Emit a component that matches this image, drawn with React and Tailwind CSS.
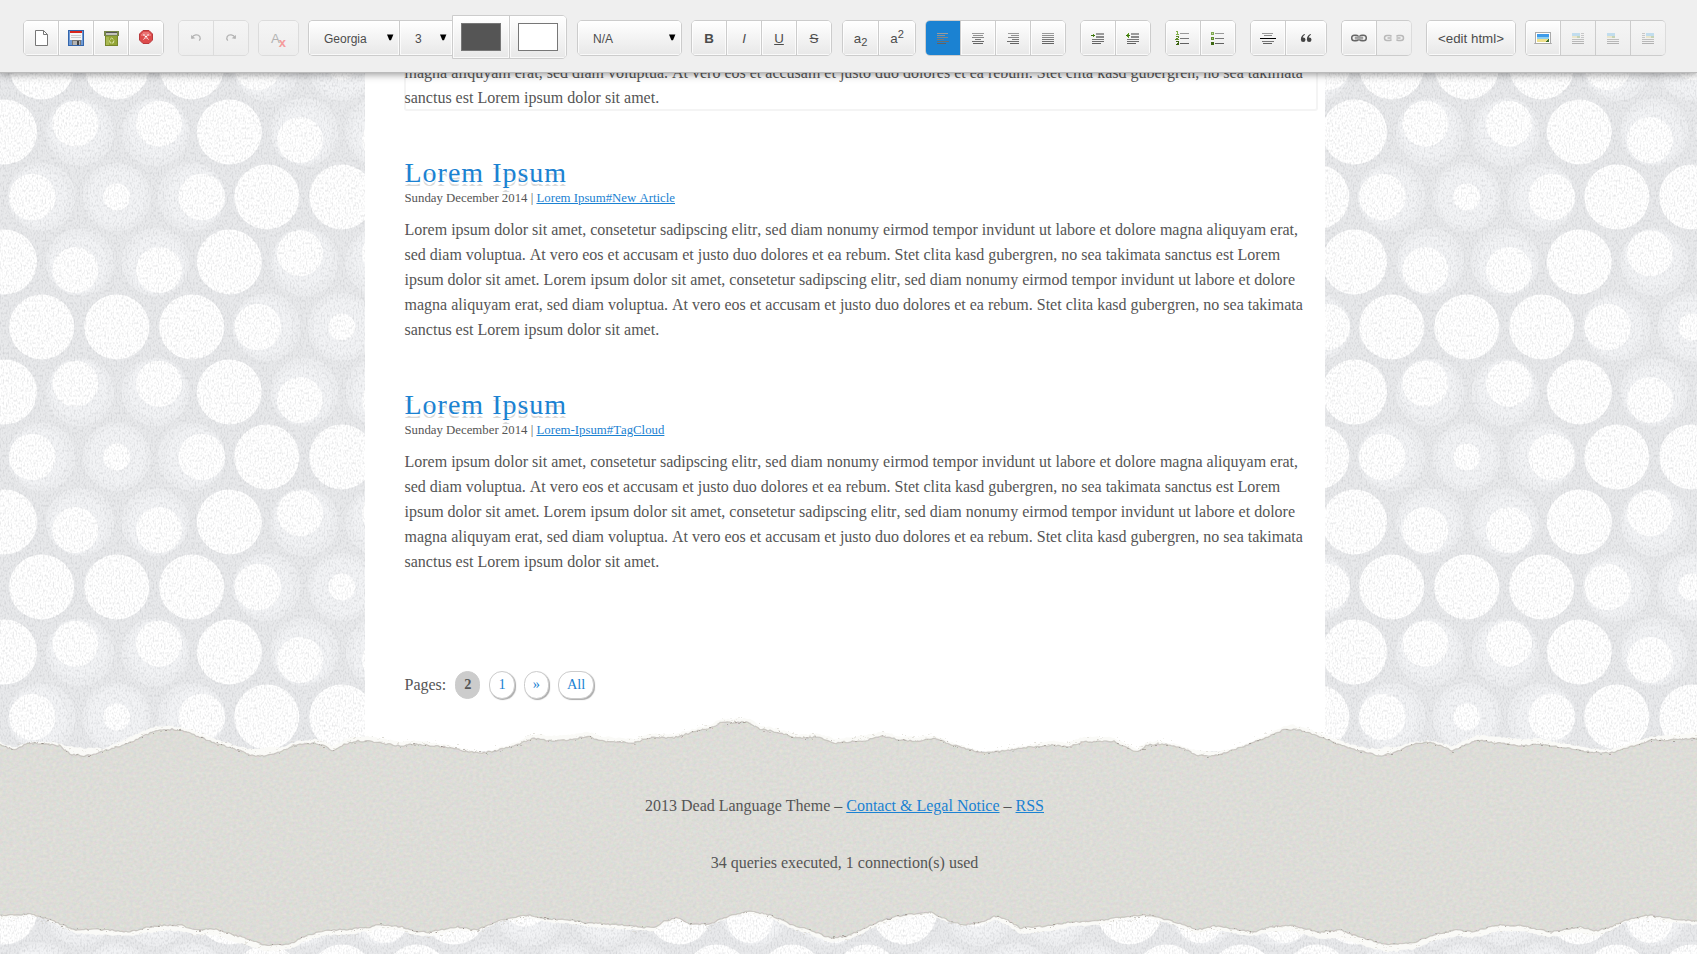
import React from "react";

const LINE_A =
  "Lorem ipsum dolor sit amet, consetetur sadipscing elitr, sed diam nonumy eirmod tempor invidunt ut labore et dolore magna aliquyam erat, sed diam voluptua. At vero eos et accusam et justo duo dolores et ea rebum. Stet clita kasd gubergren, no sea takimata sanctus est Lorem ipsum dolor sit amet.";
const LOREM = `${LINE_A} ${LINE_A}`;
const TAIL =
  "magna aliquyam erat, sed diam voluptua. At vero eos et accusam et justo duo dolores et ea rebum. Stet clita kasd gubergren, no sea takimata sanctus est Lorem ipsum dolor sit amet.";

/* ---------- dotted backdrop ---------- */

// [ring x, ring y, dot x, dot y, dot radius]
const RINGS = [
  [80, 132, 75.3, 123.7, 23],
  [155.5, 132, 159, 123.7, 23],
  [304.5, 132, 300, 140, 23],
  [379.5, 132, 385, 140, 23],
  [41.5, 197, 32.3, 197, 23.3],
  [116.7, 197, 116.7, 197, 13.5],
  [191.5, 197, 201.7, 197, 23.3],
  [80, 262, 75.3, 270, 23],
  [155.5, 262, 159, 270, 23],
  [304.5, 262, 300, 253.3, 23],
  [379.5, 262, 385, 253.3, 23],
  [266.5, 67, 257.7, 67, 23.3],
  [341.8, 67, 341.8, 67, 13.5],
  [416.7, 67, 426.7, 67, 23.3],
];
const DOTS = [
  [4.5, 132],
  [454.5, 132],
  [229.3, 132],
  [4.5, 262],
  [454.5, 262],
  [229.3, 262],
  [4.5, 2],
  [454.5, 2],
  [229.3, 2],
  [266.8, 197],
  [341.8, 197],
  [416.8, 197],
  [41.7, 67],
  [116.8, 67],
  [191.7, 67],
];
const WRAPPED = [
  [80, 2, 75.3, 10, 23],
  [155.5, 2, 159, 10, 23],
  [304.5, 2, 300, -6.7, 23],
  [379.5, 2, 385, -6.7, 23],
];

function Backdrop() {
  const rings = [...RINGS, ...WRAPPED];
  return (
    <svg className="absolute inset-0" width="1697" height="954" aria-hidden="true">
      <defs>
        <pattern id="dots" width="450" height="260" patternUnits="userSpaceOnUse">
          <rect width="450" height="260" fill="#e8e9eb" />
          {rings.map((r, i) => (
            <circle key={`a${i}`} cx={r[0]} cy={r[1]} r="34" fill="#eeeff1" />
          ))}
          {rings.map((r, i) => (
            <circle key={`b${i}`} cx={(r[0] * 2 + r[2]) / 3} cy={(r[1] * 2 + r[3]) / 3} r="29" fill="#f2f3f5" />
          ))}
          {rings.map((r, i) => (
            <circle key={`c${i}`} cx={r[2]} cy={r[3]} r={r[4]} fill="#fff" />
          ))}
          {DOTS.map((d, i) => (
            <circle key={`d${i}`} cx={d[0]} cy={d[1]} r="32.5" fill="#fff" />
          ))}
        </pattern>
        <filter id="weave" x="0" y="0" width="100%" height="100%" colorInterpolationFilters="sRGB">
          <feTurbulence type="fractalNoise" baseFrequency="0.62 0.4" numOctaves="1" seed="4" />
          <feColorMatrix values="0 0 0 0 0.52  0 0 0 0 0.53  0 0 0 0 0.55  0.6 0 0 0 -0.27" />
        </filter>
      </defs>
      <rect width="1697" height="954" fill="url(#dots)" />
      <rect width="1697" height="954" filter="url(#weave)" />
    </svg>
  );
}

/* ---------- torn paper ---------- */

const TOP = [0,745,15,750,28,743,45,744,60,746,70,754,85,756,100,752,120,746,135,740,155,731,173,729,185,731,200,737,215,743,235,749,250,755,265,756,280,752,295,745,315,743,325,746,333,751,345,744,358,741,370,741,400,746,413,744,447,747,460,750,483,753,503,749,517,745,533,738,552,741,570,740,587,736,603,741,633,743,653,737,673,738,697,731,710,728,720,723,748,722,760,729,777,732,797,738,817,737,835,743,863,741,883,736,900,740,917,741,933,738,953,745,983,753,1003,751,1030,747,1053,745,1067,747,1083,742,1113,741,1125,747,1137,752,1147,745,1163,744,1180,747,1197,755,1213,756,1230,751,1247,745,1267,737,1283,730,1293,729,1303,731,1323,738,1340,745,1357,750,1380,756,1397,752,1410,745,1427,742,1442,746,1452,751,1463,746,1477,740,1497,743,1523,746,1537,744,1567,748,1590,752,1610,753,1633,746,1650,740,1670,740,1698,738];
const BOTTOM = [0,916,15,915,30,914,45,918,60,924,75,930,90,929,110,930,130,932,145,928,165,925,180,925,195,930,215,929,235,935,250,940,265,945,290,944,305,936,325,930,345,930,370,927,377,924,403,927,417,932,430,932,458,927,477,930,493,923,510,918,530,915,550,919,570,920,587,923,620,925,653,928,663,922,677,917,690,924,710,924,727,917,747,911,770,915,790,924,810,930,830,938,847,936,863,929,883,920,903,915,930,912,947,920,963,925,983,922,995,916,1007,920,1020,928,1047,926,1070,922,1097,921,1120,917,1147,915,1163,919,1183,924,1197,930,1213,926,1233,929,1253,932,1270,927,1290,925,1303,928,1320,932,1340,930,1363,938,1387,945,1413,943,1433,935,1457,930,1473,932,1497,925,1523,926,1550,932,1580,927,1597,931,1610,927,1627,920,1650,915,1673,919,1698,921];
// Rim thickness along each edge
const RIM_TOP = [0,3,28,1,62,3,72,8,90,7,105,2,130,5,150,5,173,3,215,4,240,4,255,7,270,8,285,3,330,4,355,5,400,4,483,1,550,5,633,4,700,3,740,4,800,3,860,5,983,1,1080,5,1180,2,1200,5,1240,1,1290,4,1350,4,1370,5,1385,8,1405,3,1425,1,1450,4,1480,5,1520,7,1560,4,1600,3,1645,3,1670,5,1698,5];
const RIM_BOTTOM = [0,3,30,1,50,1,75,3,95,6,130,4,165,6,200,5,235,7,265,6,290,5,325,5,370,4,430,4,500,1,530,3,600,4,650,3,690,1,727,1,747,3,800,4,850,4,930,2,970,1,1020,6,1090,4,1147,2,1200,4,1260,4,1300,6,1340,8,1387,7,1430,6,1500,6,1550,5,1590,6,1627,1,1650,3,1698,4];

function randomizer(seed) {
  let s = seed;
  return () => {
    s = (s * 16807) % 2147483647;
    return s / 2147483647;
  };
}
function sample(points, x) {
  for (let i = 2; i < points.length; i += 2) {
    if (x <= points[i]) {
      const t = (x - points[i - 2]) / (points[i] - points[i - 2]);
      return points[i - 1] + t * (points[i + 1] - points[i - 1]);
    }
  }
  return points[points.length - 1];
}
function edge(points, rim, sign, seed, rough) {
  const rnd = randomizer(seed);
  const out = [];
  for (let x = 0; x <= 1698; x += 2) {
    const y = sample(points, x) + sign * (rim ? sample(rim, x) : 0) + (rnd() - 0.5) * rough;
    out.push([x, Math.round(y * 10) / 10]);
  }
  return out;
}
const toPath = (pts) => "M" + pts.map((p) => p.join(" ")).join("L");
const closed = (a, b) => "M" + [...a, ...[...b].reverse()].map((p) => p.join(" ")).join("L") + "Z";

const topEdge = edge(TOP, null, -1, 11, 1.6);
const bottomEdge = edge(BOTTOM, null, 1, 23, 1.6);
const topRim = edge(TOP, RIM_TOP, -1, 37, 1.8);
const bottomRim = edge(BOTTOM, RIM_BOTTOM, 1, 51, 1.8);

function specks(count, seed, spread, shift) {
  const rnd = randomizer(seed);
  const out = [];
  for (let i = 0; i < count; i++) {
    const x = Math.floor(rnd() * 1697);
    const top = rnd() > 0.5;
    const base = sample(top ? TOP : BOTTOM, x) + (top ? -shift : shift);
    const strength = rnd();
    out.push({ x, y: Math.round(base + (rnd() - 0.5) * spread), w: rnd() > 0.6 ? 2 : 1, o: 0.15 + strength * 0.4 });
  }
  return out;
}
const darkSpecks = specks(420, 77, 3, 0);
const rimSpecks = specks(900, 131, 6, 3);

function Paper() {
  return (
    <svg className="absolute inset-0" width="1697" height="954" aria-hidden="true">
      <defs>
        <filter id="grain" x="0" y="0" width="100%" height="100%" colorInterpolationFilters="sRGB">
          <feTurbulence type="fractalNoise" baseFrequency="0.3 0.36" numOctaves="3" seed="9" result="n" />
          <feColorMatrix in="n" values="0.1 0 0 0 0.815  0 0.08 0 0 0.824  0.03 0 0.07 0 0.795  0 0 0 0 1" result="c" />
          <feComposite in="c" in2="SourceGraphic" operator="in" />
        </filter>
      </defs>
      <path d={closed(topRim, bottomRim)} fill="#fafaf7" />
      {rimSpecks.map((s, i) => (
        <rect key={i} x={s.x} y={s.y} width={s.w} height="1" fill="#cfccc2" opacity={s.o} />
      ))}
      <path d={closed(topEdge, bottomEdge)} fill="#dddcd7" filter="url(#grain)" />
      <path d={toPath(topEdge)} fill="none" stroke="#aca69f" strokeWidth="1.200" opacity="0.5" />
      <path d={toPath(bottomEdge)} fill="none" stroke="#aca69f" strokeWidth="1.200" opacity="0.5" />
      {darkSpecks.map((s, i) => (
        <rect key={i} x={s.x} y={s.y} width={s.w} height="1" fill="#7d736c" opacity={s.o} />
      ))}
    </svg>
  );
}

/* ---------- toolbar ---------- */

const BTN = "flex items-center justify-center shadow-[inset_0_0_0_1px_rgba(255,255,255,0.75)] bg-linear-to-b from-white to-[#e8e8e8]";

function Group({ className = "", height = "h-9", children }) {
  return (
    <div className={`flex ${height} shrink-0 overflow-hidden rounded-[5px] border border-[#ccc] divide-x divide-[#ccc] ${className}`}>
      {children}
    </div>
  );
}
function Btn({ w = "w-[35px]", className = "", children }) {
  return <button className={`${BTN} ${w} ${className}`}>{children}</button>;
}
function Svg({ children, className = "" }) {
  return (
    <svg width="18" height="18" viewBox="0 0 18 18" className={`shrink-0 ${className}`} shapeRendering="crispEdges">
      {children}
    </svg>
  );
}
const Arrow = () => (
  <svg width="7" height="7" viewBox="0 0 7 7" className="-mt-[3px] shrink-0">
    <path d="M0 0.500h6.400L4 6.300H2.400z" fill="#000" />
  </svg>
);

const NewIcon = () => (
  <Svg>
    <path d="M3.500 1.500h8l4 4v11h-12z" fill="#fff" stroke="#777" shapeRendering="auto" />
    <path d="M11.500 1.500v4h4" fill="none" stroke="#777" shapeRendering="auto" />
  </Svg>
);
const SaveIcon = () => (
  <Svg>
    <rect x="1.500" y="1.500" width="15" height="15" fill="#6f9bd6" stroke="#3465ab" />
    <rect x="3" y="2" width="12" height="9" fill="#f6f6f6" />
    <rect x="3" y="2" width="12" height="2" fill="#d8251b" />
    <rect x="4" y="6" width="10" height="1" fill="#ccc" />
    <rect x="4" y="8" width="10" height="1" fill="#ccc" />
    <rect x="5" y="11" width="9" height="5" fill="#777" />
    <rect x="6" y="12" width="7" height="4" fill="#b4b4b4" />
    <rect x="10" y="12" width="2" height="4" fill="#444" />
  </Svg>
);
const BinIcon = () => (
  <Svg>
    <rect x="3" y="7" width="13" height="10" fill="#76852b" />
    <rect x="4" y="7" width="11" height="9" fill="#93a535" />
    <rect x="4" y="8" width="3" height="8" fill="#a9b952" />
    <rect x="2" y="2" width="15" height="5" fill="#78874a" />
    <rect x="4" y="3" width="11" height="1" fill="#555" />
    <rect x="4" y="4" width="11" height="2" fill="#c4c4bd" />
    <path d="M8 10.500l1.700-1.500 1.700 1.500M7.500 11.500l.8 2.500h1.200M12 11.500l-.8 2.500H10" fill="none" stroke="#dde6ac" shapeRendering="auto" />
  </Svg>
);
const StopIcon = () => (
  <Svg className="-mt-[2px] -ml-px">
    <path d="M6 2.500h6l3.500 3.500v6l-3.500 3.500h-6l-3.500-3.500v-6z" fill="#dd4b4b" stroke="#b93a3e" shapeRendering="auto" />
    <path d="M4 8V6.500L6.500 4h5L14 6.500V8z" fill="#ee8888" opacity="0.7" />
    <path d="M6.500 6.500l5 5M11.500 6.500l-5 5" stroke="#fff" strokeWidth="1.200" strokeDasharray="1.400 0.800" shapeRendering="auto" />
  </Svg>
);

const GREYS = ["#9b9b9b", "#919191", "#858585", "#797979", "#6e6e6e", "#636363"];
function Lines({ rows }) {
  return (
    <Svg>
      {rows.map(([x, w], i) => (
        <rect key={i} x={x} y={4 + i * 2} width={w} height="1" fill={GREYS[i]} />
      ))}
    </Svg>
  );
}
const LEFT = [[3, 11], [3, 8], [3, 11], [3, 7], [3, 12], [3, 9]];
const CENTER = [[3, 12], [4, 10], [3, 12], [6, 6], [3, 12], [4, 10]];
const RIGHT = [[4, 11], [7, 8], [4, 11], [8, 7], [3, 12], [6, 9]];
const FULL = [[3, 12], [3, 12], [3, 12], [3, 12], [3, 12], [3, 12]];

function Indent({ flip }) {
  return (
    <Svg>
      <path d={flip ? "M2 6.500l3-2.500v5z" : "M6.500 6.500l-3-2.500v5z"} fill="#5d9a1f" />
      <rect x="2" y="6" width="4" height="1" fill="#3c7012" />
      <rect x="7" y="4" width="8" height="2" fill="#9b9b9b" />
      <rect x="7" y="7" width="8" height="2" fill="#8a8a8a" />
      <rect x="3" y="10" width="12" height="1" fill="#777" />
      <rect x="3" y="12" width="12" height="1" fill="#6c6c6c" />
      <rect x="3" y="14" width="9" height="1" fill="#606060" />
    </Svg>
  );
}
const NumberList = () => (
  <Svg>
    <path d="M2 2.500h1.500V5M2 5.500h3" fill="none" stroke="#7fae45" />
    <path d="M2 7.500h2.500v1L2 10.500h3" fill="none" stroke="#5c8a28" />
    <path d="M2 12.500h2.500v3H2M3 14h2" fill="none" stroke="#3c6410" />
    <rect x="6" y="4" width="9" height="1" fill="#999" />
    <rect x="6" y="9" width="9" height="1" fill="#777" />
    <rect x="6" y="14" width="9" height="1" fill="#606060" />
  </Svg>
);
const BulletList = () => (
  <Svg>
    <rect x="2" y="3" width="3" height="3" fill="#80a951" />
    <rect x="2" y="8" width="3" height="3" fill="#608c30" />
    <rect x="2" y="13" width="3" height="3" fill="#3e6812" />
    <rect x="3" y="4" width="1" height="1" fill="#c6dba5" />
    <rect x="3" y="9" width="1" height="1" fill="#a5c67a" />
    <rect x="6" y="4" width="9" height="1" fill="#999" />
    <rect x="6" y="9" width="9" height="1" fill="#777" />
    <rect x="6" y="14" width="9" height="1" fill="#606060" />
  </Svg>
);
const Rule = () => (
  <Svg>
    <rect x="3" y="4" width="11" height="1" fill="#999" />
    <rect x="5" y="6" width="8" height="1" fill="#888" />
    <rect x="1" y="9" width="16" height="1" fill="#000" />
    <rect x="3" y="12" width="12" height="1" fill="#777" />
    <rect x="4" y="14" width="9" height="1" fill="#606060" />
  </Svg>
);
const Quote = () => (
  <Svg>
    <g fill="#444" shapeRendering="auto">
      <circle cx="6.200" cy="10.700" r="2.300" />
      <path d="M3.900 10.700C3.700 8 5.200 5.800 7.700 5l.3.700C6.500 6.500 5.700 7.500 5.800 9z" />
      <circle cx="12.200" cy="10.700" r="2.300" />
      <path d="M9.900 10.700C9.700 8 11.200 5.800 13.700 5l.3.700C12.500 6.500 11.700 7.500 11.800 9z" />
    </g>
  </Svg>
);
const Link = () => (
  <Svg>
    <g fill="none" shapeRendering="auto">
      <rect x="1.700" y="6.200" width="7" height="5.600" rx="2.800" stroke="#666" strokeWidth="1.500" />
      <rect x="9.300" y="6.200" width="7" height="5.600" rx="2.800" stroke="#666" strokeWidth="1.500" />
      <path d="M4.800 9h8.400" stroke="#f2f2f2" strokeWidth="3.200" />
      <path d="M4.800 8.200h8.400M4.800 9.900h8.400" stroke="#555" strokeWidth="0.800" />
    </g>
  </Svg>
);
const Unlink = () => (
  <svg width="22" height="18" viewBox="0 0 22 18" className="shrink-0 opacity-40">
    <g fill="none" stroke="#666" strokeWidth="1.500">
      <path d="M8.500 7.500a2.500 2 0 0 0-2-1H4a2.500 2.500 0 0 0 0 5h2.500a2.500 2 0 0 0 2-1" />
      <path d="M4.500 9h4" />
      <path d="M13.500 7.500a2.500 2 0 0 1 2-1H18a2.500 2.500 0 0 1 0 5h-2.500a2.500 2 0 0 1-2-1" />
      <path d="M13.500 9h4" />
    </g>
  </svg>
);
const Picture = () => (
  <Svg className="-mt-px">
    <rect x="0" y="14" width="18" height="1" fill="#bbb" />
    <rect x="1.500" y="3.500" width="15" height="11" rx="1" fill="#fff" stroke="#aaa" />
    <rect x="3" y="5" width="12" height="4" fill="#3f9cea" />
    <rect x="3" y="8" width="12" height="2" fill="#8fd0f0" />
    <rect x="3" y="10" width="12" height="3" fill="#eee08d" />
    <path d="M15 9v4h-3z" fill="#3f6d2a" />
  </Svg>
);
function PicturePlace({ kind }) {
  const x = kind === "right" ? 7 : 3;
  return (
    <Svg className="opacity-40">
      <rect x={x} y="4" width="8" height="3" fill="#7cc0ea" />
      <rect x={x} y="7" width="8" height="2" fill="#e3d896" />
      <rect x={x + 5} y="7" width="3" height="2" fill="#86a860" />
      {kind !== "center" &&
        [4, 6, 8].map((y) => <rect key={y} x={kind === "right" ? 3 : 12} y={y} width="3" height="1" fill="#888" />)}
      <rect x="3" y="10" width="12" height="1" fill="#777" />
      <rect x="3" y="12" width="12" height="1" fill="#666" />
      <rect x="3" y="14" width="12" height="1" fill="#555" />
    </Svg>
  );
}

function Toolbar() {
  const offBtn = "from-[#f5f5f5]! to-[#ededed]! shadow-none!";
  const text = "pt-0.5";
  return (
    <header className="relative z-10 flex h-[73px] items-start border-b border-[#bbb] bg-[#efefef] pt-5 pl-[23px] font-['Liberation_Sans',sans-serif] text-[13.333px] leading-none text-[#4c4c4c] shadow-[0_1px_8px_rgba(0,0,0,0.45)]">
      <Group className="w-[141px]">
        <Btn><NewIcon /></Btn>
        <Btn><SaveIcon /></Btn>
        <Btn><BinIcon /></Btn>
        <Btn w="w-[34px]"><StopIcon /></Btn>
      </Group>
      <Group className="ml-[14px] w-[71px] border-[#dcdcdc]! divide-[#dcdcdc]!">
        <Btn className={offBtn}>
          <svg width="12" height="10" viewBox="0 0 12 10"><path d="M1.800 5C3.500 1.500 8 .8 9.800 3.600c.9 1.500.4 2.900-.6 4.100" fill="none" stroke="#b4b4b4" strokeWidth="1.300" /><path d="M1 2l.3 4 4-.7z" fill="#b4b4b4" /></svg>
        </Btn>
        <Btn w="w-[34px]" className={offBtn}>
          <svg width="12" height="10" viewBox="0 0 12 10"><path d="M10.200 5C8.500 1.500 4 .8 2.200 3.600c-.9 1.500-.4 2.900.6 4.100" fill="none" stroke="#b4b4b4" strokeWidth="1.300" /><path d="M11 2l-.3 4-4-.7z" fill="#b4b4b4" /></svg>
        </Btn>
      </Group>
      <Group className="ml-[9px] w-[41px] border-[#dcdcdc]!">
        <Btn w="w-full" className={offBtn}>
          <span className="mt-0.5 text-[#b4b4b4]">A</span>
          <span className="mt-[8px] -ml-px text-[13px] font-bold text-[#f59b9b]">x</span>
        </Btn>
      </Group>
      <Group className="ml-[9px] w-[144px] rounded-r-none! border-r-0!">
        <Btn w="w-[91px]" className="justify-between! pt-0.5 pr-[5px] pl-[15px] text-xs">
          Georgia<Arrow />
        </Btn>
        <Btn w="w-[52px]" className="justify-between! pt-0.5 pr-[5px] pl-[15px] text-xs">
          3<Arrow />
        </Btn>
      </Group>
      <Group height="h-11" className="-mt-[5px] w-[115px] rounded-l-none!">
        <Btn w="w-[57px]">
          <span className="h-7 w-10 border border-[#777] bg-[#555]" />
        </Btn>
        <Btn w="w-[56px]">
          <span className="h-7 w-10 border border-[#777] bg-white" />
        </Btn>
      </Group>
      <Group className="ml-[10px] w-[105px]">
        <Btn w="w-full" className="justify-between! pt-0.5 pr-[5px] pl-[15px] text-xs">
          N/A<Arrow />
        </Btn>
      </Group>
      <Group className="ml-[9px] w-[141px]">
        <Btn className={`${text} font-bold`}>B</Btn>
        <Btn className={`${text} italic`}>I</Btn>
        <Btn className={`${text} underline`}>U</Btn>
        <Btn w="w-[34px]" className={`${text} line-through`}>S</Btn>
      </Group>
      <Group className="ml-[10px] w-[74px]">
        <Btn w="w-[36px]" className={text}><span>a<sub className="text-[11.100px]">2</sub></span></Btn>
        <Btn w="w-[36px]" className={text}><span>a<sup className="text-[11.100px]">2</sup></span></Btn>
      </Group>
      <Group className="ml-[9px] w-[141px]">
        <Btn className="from-[#1b82d2]! to-[#1b82d2]! shadow-none!"><Lines rows={LEFT} /></Btn>
        <Btn><Lines rows={CENTER} /></Btn>
        <Btn><Lines rows={RIGHT} /></Btn>
        <Btn w="w-[34px]"><Lines rows={FULL} /></Btn>
      </Group>
      <Group className="ml-[14px] w-[71px]">
        <Btn><Indent /></Btn>
        <Btn w="w-[34px]"><Indent flip /></Btn>
      </Group>
      <Group className="ml-[14px] w-[71px]">
        <Btn><NumberList /></Btn>
        <Btn w="w-[34px]"><BulletList /></Btn>
      </Group>
      <Group className="ml-[14px] w-[77px]">
        <Btn><Rule /></Btn>
        <Btn w="w-[40px]"><Quote /></Btn>
      </Group>
      <Group className="ml-[14px] w-[71px] border-r-[#dcdcdc]!">
        <Btn><Link /></Btn>
        <Btn w="w-[34px]" className={offBtn}><Unlink /></Btn>
      </Group>
      <Group className="ml-[14px] w-[90px]">
        <Btn w="w-full" className={text}>&lt;edit html&gt;</Btn>
      </Group>
      <Group className="ml-[9px] w-[141px] border-r-[#dcdcdc]!">
        <Btn><Picture /></Btn>
        <Btn className={offBtn}><PicturePlace kind="left" /></Btn>
        <Btn className={offBtn}><PicturePlace kind="center" /></Btn>
        <Btn w="w-[34px]" className={offBtn}><PicturePlace kind="right" /></Btn>
      </Group>
    </header>
  );
}

/* ---------- content ---------- */

function Post({ link, className }) {
  return (
    <article className={className}>
      <h2 className="h-[33px] text-[28px] leading-[36px] tracking-[1px] text-[#1b82d2] [text-shadow:0_2px_0_#fff,0_4px_0_#d8d8d8]">Lorem Ipsum</h2>
      <p className="relative h-5 text-[12.800px] leading-5">
        Sunday December 2014 | <a className="text-[#1b82d2] underline">{link}</a>
      </p>
      <p className="mt-[9px] text-base leading-[25px]">{LOREM}</p>
    </article>
  );
}

const PILL = "flex h-7 items-center rounded-[13px] border px-2 text-[14.400px]";

export default function App() {
  return (
    <div className="relative h-[954px] w-[1697px] overflow-hidden bg-[#e7e8ea] font-['Liberation_Serif',serif] text-[#555] [font-kerning:none]">
      <Backdrop />
      <Toolbar />
      <main className="relative ml-[365px] h-[690px] w-[960px] bg-white pr-[7px] pl-[39.500px]">
        <div className="-mt-3 -ml-[0.500px] h-[50px] rounded-[3px] border-2 border-[#f4f4f4]">
          <p className="-mt-[3px] -mr-1 -ml-[1.500px] h-[50px] text-base leading-[25px]">{TAIL}</p>
        </div>
        <Post link="Lorem Ipsum#New Article" className="mt-[44px]" />
        <Post link="Lorem-Ipsum#TagCloud" className="mt-[45px]" />
        <nav className="mt-[97px] flex h-7 items-center">
          <span className="mr-[9px] text-base">Pages:</span>
          <span className={`${PILL} mr-[9px] border-[#ccc] bg-[#ccc] font-bold`}>2</span>
          <a className={`${PILL} mr-[9px] border-[#ccc] bg-white text-[#1b82d2] shadow-[1px_1px_1px_#aaa]`}>1</a>
          <a className={`${PILL} mr-[9px] border-[#ccc] bg-white text-[#1b82d2] shadow-[1px_1px_1px_#aaa]`}>»</a>
          <a className={`${PILL} border-[#ccc] bg-white text-[#1b82d2] shadow-[1px_1px_1px_#aaa]`}>All</a>
        </nav>
      </main>
      <Paper />
      <footer className="relative ml-[365px] w-[959px] pt-[42px] text-center text-base leading-[25px]">
        <p>
          2013 Dead Language Theme – <a className="text-[#1b82d2] underline">Contact &amp; Legal Notice</a> –{" "}
          <a className="text-[#1b82d2] underline">RSS</a>
        </p>
        <p className="mt-8">34 queries executed, 1 connection(s) used</p>
      </footer>
    </div>
  );
}
